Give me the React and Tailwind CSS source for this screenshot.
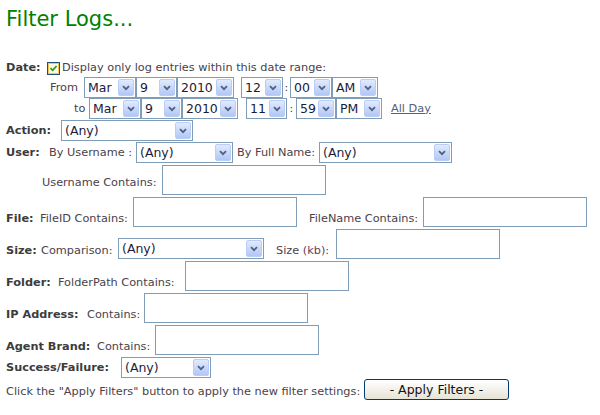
import React from "react";

const bold = "font-bold text-[#3c3c3c]";

function Chevron() {
  return (
    <svg width="8" height="6" viewBox="0 0 8 6">
      <path d="M1 1.2 L4 4.2 L7 1.2" fill="none" stroke="#4d6185" strokeWidth="1.8" />
    </svg>
  );
}

function Select({ value, className = "" }) {
  return (
    <div className={`flex h-[21px] shrink-0 border border-[#7f9db9] bg-white p-px ${className}`}>
      <span className="flex-1 overflow-hidden whitespace-nowrap pl-[2px] text-[12.5px] leading-[17px] text-[#1b1b3a]">
        {value}
      </span>
      <span className="flex w-[16px] items-center justify-center rounded-[2px] border border-[#b9cdf6] bg-gradient-to-b from-[#e2eafd] to-[#b3c7f5]">
        <Chevron />
      </span>
    </div>
  );
}

function Field({ className = "" }) {
  return (
    <input
      type="text"
      readOnly
      className={`h-[30px] w-[164px] shrink-0 border border-[#7f9db9] bg-white outline-none ${className}`}
    />
  );
}

function Check() {
  return (
    <span className="flex h-[13px] w-[13px] shrink-0 items-center justify-center border border-[#1c5180] bg-white">
      <span className="flex h-[11px] w-[11px] items-center justify-center border border-[#f5c350] bg-[#fdf7e4]">
        <svg width="9" height="9" viewBox="0 0 9 9">
          <path d="M1.5 4.2 L3.6 6.3 L7.6 2" fill="none" stroke="#21a121" strokeWidth="1.8" />
        </svg>
      </span>
    </span>
  );
}

export default function App() {
  return (
    <div className="min-h-[415px] w-[600px] bg-white pl-[6px] font-['DejaVu_Sans','Liberation_Sans',sans-serif] text-[11.3px] leading-[14px] text-[#4a424a]">
      <h1 className="mt-[7px] h-[24px] text-[21px] leading-[24px] font-normal text-[#008000]">
        Filter Logs...
      </h1>

      {/* date range */}
      <div className="mt-[28px] flex h-[18px] items-center">
        <span className={`w-[41px] ${bold}`}>Date:</span>
        <Check />
        <span className="ml-[2px]">Display only log entries within this date range:</span>
      </div>
      <div className="flex h-[21px] items-center">
        <span className="ml-[44px] w-[34px]">From</span>
        <Select value="Mar" className="w-[52px]" />
        <Select value="9" className="w-[41px]" />
        <Select value="2010" className="w-[57px]" />
        <Select value="12" className="ml-[7px] w-[42px]" />
        <span className="w-[7px] text-center">:</span>
        <Select value="00" className="w-[42px]" />
        <Select value="AM" className="w-[46px]" />
      </div>
      <div className="flex h-[21px] items-center">
        <span className="ml-[68px] w-[15px]">to</span>
        <Select value="Mar" className="w-[52px]" />
        <Select value="9" className="w-[41px]" />
        <Select value="2010" className="w-[56px]" />
        <Select value="11" className="ml-[8px] w-[41px]" />
        <span className="w-[9px] text-center">:</span>
        <Select value="59" className="w-[40px]" />
        <Select value="PM" className="w-[46px]" />
        <a href="#" className="ml-[9px] text-[#566080] underline">
          All Day
        </a>
      </div>

      <div className="mt-[1px] flex h-[21px] items-center">
        <span className={`w-[55px] ${bold}`}>Action:</span>
        <Select value="(Any)" className="w-[132px]" />
      </div>

      <div className="mt-[1px] flex h-[21px] items-center">
        <span className={`w-[43px] ${bold}`}>User:</span>
        <span className="w-[87px]">By Username :</span>
        <Select value="(Any)" className="w-[97px]" />
        <span className="ml-[4px] w-[82px]">By Full Name:</span>
        <Select value="(Any)" className="w-[133px]" />
      </div>

      <div className="mt-[2px] flex items-end">
        <span className="mb-[5px] ml-[36px] w-[120px]">Username Contains:</span>
        <Field />
      </div>

      <div className="mt-[2px] flex items-end">
        <span className={`mb-[1px] w-[34px] ${bold}`}>File:</span>
        <span className="mb-[1px] w-[93px]">FileID Contains:</span>
        <Field />
        <span className="mb-[1px] ml-[12px] w-[114px]">FileName Contains:</span>
        <Field />
      </div>

      <div className="mt-[2px] flex items-end">
        <span className={`mb-[1px] w-[35px] ${bold}`}>Size:</span>
        <span className="mb-[1px] w-[77px]">Comparison:</span>
        <Select value="(Any)" className="w-[146px]" />
        <span className="mb-[1px] ml-[12px] w-[60px]">
          Size <span className="text-[#6a3a5a]">(kb)</span>:
        </span>
        <Field />
      </div>

      <div className="mt-[2px] flex items-end">
        <span className={`mb-[1px] w-[52px] ${bold}`}>Folder:</span>
        <span className="mb-[1px] w-[127px]">FolderPath Contains:</span>
        <Field />
      </div>

      <div className="mt-[2px] flex items-end">
        <span className={`mb-[1px] w-[81px] ${bold}`}>IP Address:</span>
        <span className="mb-[1px] w-[57px]">Contains:</span>
        <Field />
      </div>

      <div className="mt-[2px] flex items-end">
        <span className={`mb-[1px] w-[91px] ${bold}`}>Agent Brand:</span>
        <span className="mb-[1px] w-[58px]">Contains:</span>
        <Field />
      </div>

      <div className="mt-[2px] flex h-[21px] items-center">
        <span className={`w-[115px] ${bold}`}>Success/Failure:</span>
        <Select value="(Any)" className="w-[90px]" />
      </div>

      <div className="mt-[1px] flex h-[21px] items-end">
        <span className="mb-[1px] w-[358px] whitespace-nowrap">
          Click the "Apply Filters" button to apply the new filter settings:
        </span>
        <button
          type="button"
          className="h-[21px] w-[145px] rounded-[3px] border border-[#003c74] bg-gradient-to-b from-white to-[#e6e3d6] text-[12.5px] leading-[18px] text-[#111]"
        >
          - Apply Filters -
        </button>
      </div>
    </div>
  );
}
